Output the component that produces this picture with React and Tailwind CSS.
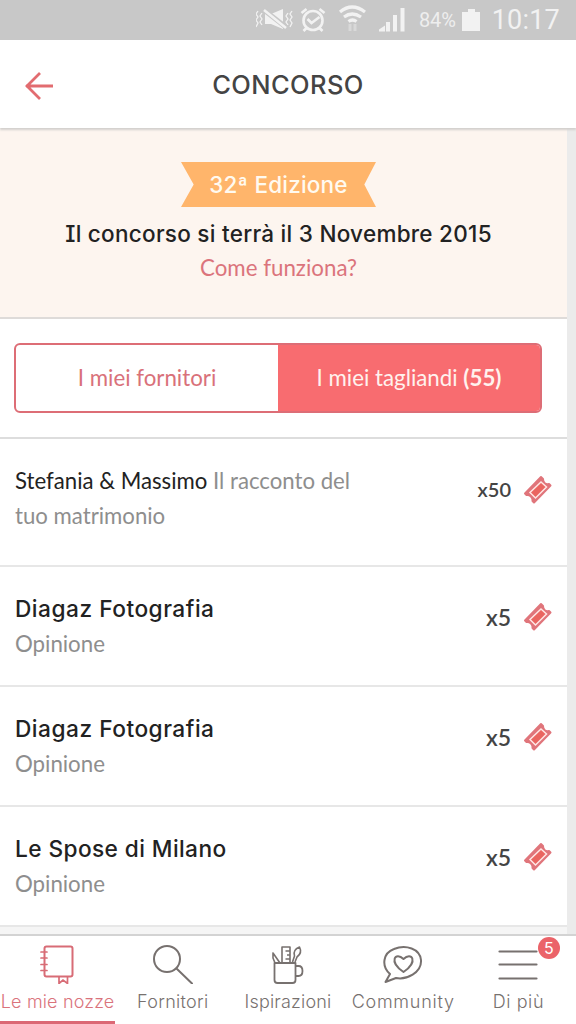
const entries = [
  { name: 'Diagaz Fotografia', detail: 'Opinione', count: 'x5', tracking: 'tracking-[0.5px]' },
  { name: 'Diagaz Fotografia', detail: 'Opinione', count: 'x5', tracking: 'tracking-[0.5px]' },
  { name: 'Le Spose di Milano', detail: 'Opinione', count: 'x5', tracking: 'tracking-[0.4px]' },
]

const TicketIcon = () => (
  <svg className="w-[30px] h-[30px] shrink-0" viewBox="0 0 30 30">
    <path
      d="M18 2 L20 4 Q20 6.500 21.500 8 Q23.500 9.700 26 9 L27.500 10.500 L11 27.500 L9.500 26 Q10 23.500 8 21.500 Q6 19.500 3.500 20 L2 18.500 Z"
      fill="#e0757b"
      stroke="#e0757b"
      strokeWidth="2"
      strokeLinejoin="round"
    />
    <path d="M18 7 L23.500 12 L12.500 23 L7 17.500 Z" fill="#ea6560" stroke="#ffe6e4" strokeWidth="1.500" />
  </svg>
)

const NotebookIcon = () => (
  <svg className="w-10 h-10 mr-0.5" viewBox="0 0 40 40" fill="none" stroke="#d86c76" strokeWidth="2" strokeLinecap="round">
    <rect x="7.500" y="2.500" width="28" height="30" rx="2" />
    <path d="M4 8h6M4 14h6M4 20.500h6M4 26.500h6M22 33v6.500l4-3.500 4.500 3.500v-6.500" strokeWidth="1.700" />
  </svg>
)

const SearchIcon = () => (
  <svg className="w-10 h-10" viewBox="0 0 40 40" fill="none" stroke="#77716f" strokeWidth="2" strokeLinecap="round">
    <circle cx="14" cy="15" r="13" />
    <path d="M23.500 24.500 39 39.500" />
  </svg>
)

const CupIcon = () => (
  <svg className="w-10 h-10" viewBox="0 0 40 40" fill="none" stroke="#77716f" strokeWidth="1.800" strokeLinejoin="round">
    <path d="M6.500 19h21v17q0 3-3 3h-15q-3 0-3-3zM27.500 22h3q4 0 4 5t-4 5h-3" />
    <path d="M12 19 5 9v5l2 5M14 19V3h8v16M17.500 7H22M19 11h3M17.500 15H22M24.500 18l2-6q-2-6 5-9 3 6-2.500 10l-2 5" strokeWidth="1.600" />
  </svg>
)

const CommunityIcon = () => (
  <svg className="w-10 h-10" viewBox="0 0 40 40" fill="none" stroke="#77716f" strokeWidth="2" strokeLinejoin="round">
    <path d="M7 30C-2 22 0 9 11 5c12-5 26 0 27 11 1 13-15 20-25 18L2.500 38z" />
    <path d="M20.500 28C5 17.500 12.500 7 20.500 15 28.500 7 36 17.500 20.500 28z" />
  </svg>
)

const MenuIcon = () => (
  <svg className="w-10 h-10" viewBox="0 0 40 40" stroke="#77716f" strokeWidth="2.200" strokeLinecap="round">
    <path d="M1.500 7.500h37M1.500 20.500h37M1.500 34.500h37" />
  </svg>
)

const tabs = [
  { label: 'Le mie nozze', Icon: NotebookIcon, active: true, tracking: 'tracking-[0.15px]' },
  { label: 'Fornitori', Icon: SearchIcon, tracking: 'tracking-[0.3px]' },
  { label: 'Ispirazioni', Icon: CupIcon, tracking: 'tracking-[0.18px]' },
  { label: 'Community', Icon: CommunityIcon, tracking: 'tracking-[0.75px]' },
  { label: 'Di più', Icon: MenuIcon, badge: 5, tracking: 'tracking-[0.6px]' },
]

const StatusBar = () => (
  <div className="h-10 shrink-0 bg-[#c8c8c8] text-[#f2f2f2] flex items-center justify-end pr-4 font-[Roboto,sans-serif]">
    <svg className="w-[152px] h-10 mr-[11px]" viewBox="0 0 152 40" fill="none" stroke="currentColor" strokeWidth="2">
      <path d="M2 11l-2 3 2 3-2 3 2 3-2 4M6 13l-2 3 2 3-2 3 2 3M32 13l-2 3 2 3-2 3 2 3M36 11l-2 3 2 3-2 3 2 3-2 4" strokeWidth="1.300" />
      <path d="M9 14h6l12-5v20l-12-5h-6z" fill="currentColor" stroke="none" />
      <path d="M8 10l23 18" stroke="#c8c8c8" strokeWidth="5" />
      <path d="M8 10l22 18" strokeWidth="2.500" />
      <circle cx="57" cy="20.500" r="9.500" strokeWidth="2.600" />
      <path d="M51.500 19l4 4 8-6M45.500 13l5-4M63.500 9l5 4M50.500 28l-3 3M63.500 28l3 3" strokeWidth="2.600" />
      <path d="M84 12q12-10 25 0M88 17q8-6 17 0M92.500 21.500q4-3 8 0" strokeWidth="3.200" />
      <path d="M94 24v7M99 24v7" strokeWidth="3" opacity=".4" />
      <path d="M123 31.500v-2l6-4v6zM130 31.500V22h4v9.500zM137 31.500V15h4v16.500zM144.500 31.500V8h4v23.500z" fill="currentColor" stroke="none" />
    </svg>
    <span className="text-[20px] tracking-[-0.1px] text-[#eeeeee] pr-[2px]">84%</span>
    <svg className="w-[18px] h-6 ml-1" viewBox="0 0 18 24" fill="currentColor">
      <path d="M6 1h7v3h5v19H0V4h6z" />
    </svg>
    <span className="text-[27px] tracking-[0.2px] ml-3">10:17</span>
  </div>
)

const EntryRow = ({ entry }) => (
  <div className="h-[120px] shrink-0 border-b-2 border-[#e7e7e7] pl-[15px] pr-[14px] flex">
    <div className="flex-1 pt-[24px]">
      <p className={`font-[Inter] font-medium text-[22.7px] leading-[35px] text-[#222] ${entry.tracking}`}>{entry.name}</p>
      <p className="text-[22.3px] tracking-[-0.03px] leading-[35px] text-[#8e8e8e]">{entry.detail}</p>
    </div>
    <div className="flex items-center gap-3 h-[70px] mt-[15px]">
      <span className="text-[23px] leading-[26px] font-semibold text-[#444]">{entry.count}</span>
      <TicketIcon />
    </div>
  </div>
)

export default function App() {
  return (
    <div className="w-[576px] h-[1024px] overflow-hidden flex flex-col bg-white font-[Lato,sans-serif]">
      <StatusBar />
      <header className="relative z-10 h-[88px] shrink-0 flex items-center bg-white shadow-[0_2px_2px_#d2cfcd] pt-[3px]">
        <svg className="w-[30px] h-[30px] ml-6" viewBox="0 0 30 30" fill="none" stroke="#e26c70" strokeWidth="2.800">
          <path d="M29 15H2M16 2 3 15l13 13" />
        </svg>
        <h1 className="flex-1 pr-[54px] text-center font-[Inter] font-medium text-[25.5px] tracking-[0.4px] text-[#444]">
          CONCORSO
        </h1>
      </header>

      <div className="flex-1 min-h-0 flex bg-[#ebebeb]">
        <main className="w-[567px] bg-white flex flex-col overflow-hidden">
          <section className="h-[191px] shrink-0 bg-[#fdf5ef] border-b-2 border-[#dedbd9] flex flex-col items-center pt-[34px] pr-[10px]">
            <div className="w-[195px] h-[45px] bg-[#ffb56b] [clip-path:polygon(0_0,100%_0,94%_50%,100%_100%,0_100%,6.500%_50%)] flex items-center justify-center font-[Inter] font-medium text-[22.5px] tracking-[0.2px] text-[#fffaf0]">
              32ª Edizione
            </div>
            <p className="mt-[9px] font-[Inter] font-medium text-[22.5px] leading-[35px] tracking-[0.27px] text-[#222]">
              <span className="[font-feature-settings:'cv08']">I</span>l concorso si terrà il 3 Novembre 2015
            </p>
            <p className="text-[22.3px] leading-[34px] text-[#db747c]">Come funziona?</p>
          </section>

          <section className="h-[120px] shrink-0 border-b-2 border-[#dddddd] pt-6 pl-[14px]">
            <div className="w-[528px] h-[70px] flex rounded-md border-2 border-[#dd6d76] overflow-hidden text-[22.3px]">
              <button className="w-[262px] text-[#d9717a]">I miei fornitori</button>
              <button className="flex-1 bg-[#f86c70] text-[#fff2ee]">I miei tagliandi <b>(55)</b></button>
            </div>
          </section>

          <div className="h-[128px] shrink-0 border-b-2 border-[#e7e7e7] pl-[15px] pr-[14px] pt-6 flex">
            <p className="w-[360px] text-[22.2px] leading-[35px] text-[#8e8e8e]">
              <span className="text-[#222]">Stefania &amp; Massimo</span> Il racconto del<br />
              tuo matrimonio
            </p>
            <div className="ml-auto h-[54px] flex items-center gap-3">
              <span className="text-[20px] leading-6 pb-0.5 font-semibold text-[#444]">x50</span>
              <TicketIcon />
            </div>
          </div>
          {entries.map((entry, i) => <EntryRow key={i} entry={entry} />)}
          <div className="flex-1 bg-[#f5f5f5]" />
        </main>
      </div>

      <nav className="h-[90px] shrink-0 border-t-2 border-[#d3d3d3] bg-white grid grid-cols-5 font-[Inter] text-[18px]">
        {tabs.map(({ label, Icon, active, badge, tracking }) => (
          <div key={label} className={`relative flex flex-col items-center pt-[8px] whitespace-nowrap ${tracking} ${active ? 'text-[#da737c] border-b-3 border-[#dc6875]' : 'text-[#77716f]'}`}>
            <Icon />
            <span className="mt-[4px] leading-[27px] font-light">{label}</span>
            {badge && (
              <span className="absolute right-[16px] top-[1px] w-[22px] h-[22px] rounded-full bg-[#eb6369] text-white text-[16px] tracking-normal leading-[22px] text-center">{badge}</span>
            )}
          </div>
        ))}
      </nav>
    </div>
  )
}
